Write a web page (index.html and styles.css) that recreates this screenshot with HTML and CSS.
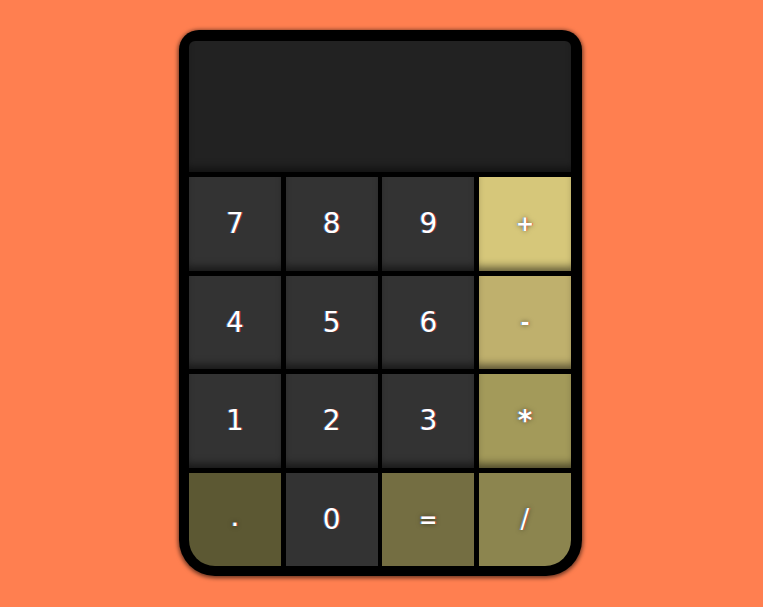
FILE: index.html
```html
<!DOCTYPE html>
<html>
<head>
<meta charset="utf-8">
<link rel="stylesheet" href="styles.css">
</head>
<body>
<div class="calc">
  <div class="screen"></div>
  <div class="keys">
    <button class="key">7</button>
    <button class="key">8</button>
    <button class="key">9</button>
    <button class="key op op-plus">+</button>
    <button class="key">4</button>
    <button class="key">5</button>
    <button class="key">6</button>
    <button class="key op op-minus">-</button>
    <button class="key">1</button>
    <button class="key">2</button>
    <button class="key">3</button>
    <button class="key op op-mul">*</button>
    <button class="key op op-dot">.</button>
    <button class="key flat">0</button>
    <button class="key op op-eq">=</button>
    <button class="key op op-div">/</button>
  </div>
</div>
</body>
</html>
```
FILE: styles.css
```css
html, body {
  margin: 0;
  padding: 0;
  height: 100%;
  background: #ff7f50;
}
body {
  display: flex;
  justify-content: center;
  align-items: flex-start;
}
.calc {
  margin-top: 30px;
  margin-left: -2px;
  width: 382px;
  padding: 11px 11px 10px 10px;
  background: #000;
  border-radius: 20px 20px 36px 36px;
  box-shadow: 0 1px 4px 1px rgba(0,0,0,0.6);
  display: flex;
  flex-direction: column;
  gap: 5px;
}
.screen {
  height: 131px;
  background: #222;
  border-radius: 6px 6px 0 0;
  box-shadow: inset 0 -8px 8px -4px rgba(0,0,0,0.5);
}
.keys {
  display: grid;
  grid-template-columns: repeat(4, 1fr);
  grid-auto-rows: 93.5px;
  gap: 5px 4.67px;
}
.key {
  border: none;
  margin: 0;
  padding: 0;
  background: #333;
  color: #fff;
  font-family: "DejaVu Sans", sans-serif;
  font-weight: 400;
  font-size: 28px;
  box-shadow: inset 0 -8px 8px -4px rgba(0,0,0,0.55);
  text-shadow: 1px 0 rgba(255,40,40,0.55), -1px 0 rgba(60,160,255,0.55);
}
.op {
  font-weight: 700;
  text-shadow: 1px 0 rgba(255,40,40,0.5), -1px 0 rgba(60,160,255,0.5), 0 0 5px rgba(0,0,0,0.55);
}
.op-plus { background: #d6c77a; font-size: 22px; }
.op-minus { background: #bfb06d; font-size: 22px; }
.op-mul { background: #a39a5a; font-size: 28px; }
.op-eq { background: #746e42; font-size: 22px; }
.op-div { background: #8c854f; font-size: 26px; font-weight: 400; border-bottom-right-radius: 26px; }
.op-dot { background: #5c5833; border-bottom-left-radius: 26px; font-size: 18px; }
.op-eq, .op-div, .op-dot, .flat { box-shadow: none; }
```
